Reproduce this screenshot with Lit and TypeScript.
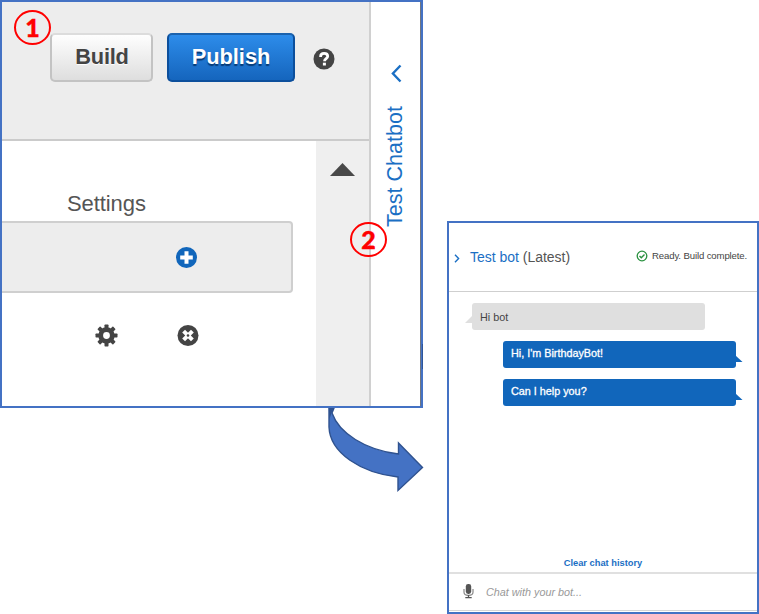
import { LitElement, html, css, svg } from "lit";
import { customElement, property } from "lit/decorators.js";

const teeth = [0, 45, 90, 135, 180, 225, 270, 315];

@customElement("step-badge")
class StepBadge extends LitElement {
  @property() n = "";
  static styles = css`
    :host { display: grid; place-items: center; box-sizing: border-box; width: 37px; height: 35px;
      border: 2px solid #f00; border-radius: 50%; color: #f00; font: 900 25px/30px Lato, sans-serif; }
    span { display: block; height: 31px; -webkit-text-stroke: 0.4px #f00; }
  `;
  render() { return html`<span>${this.n}</span>`; }
}

@customElement("bot-builder")
class BotBuilder extends LitElement {
  static styles = css`
    :host { display: flex; box-sizing: border-box; width: 423px; height: 408px; border: 2px solid #4472c4;
      background: #fff; font-family: "Liberation Sans", Arial, sans-serif; color: #555; }
    svg { display: block; flex: none; }
    .main { width: 367px; display: flex; flex-direction: column; border-right: 2px solid #d0d0d0; flex: none; }
    .bar { height: 106px; background: #ededed; border-bottom: 2px solid #cbcbcb; display: flex;
      align-items: flex-start; padding: 31px 0 0 48px; }
    .btn { box-sizing: border-box; height: 49px; border-radius: 5px; font: bold 21.8px/43px "Liberation Sans", Arial, sans-serif;
      text-align: center; padding: 0 0 2px; margin: 0; }
    .build { width: 103px; border: 2px solid #c3c3c3; border-top-color: #dcdcdc; background: linear-gradient(#fefefe, #dedede);
      color: #444; text-shadow: 0 1px 1px #fff; padding-left: 1px; letter-spacing: -0.2px; }
    .publish { width: 128px; margin-left: 14px; border: 2px solid #0c4f9c; border-top-color: #1b62ad;
      background: linear-gradient(#2d8cea, #1565bd); color: #fff; text-shadow: 0 2px 1px #073b77; }
    .help { margin: 15px 0 0 18px; }
    .body { flex: 1; display: flex; }
    .content { width: 314px; }
    .label { margin: 51px 0 0 65px; font-size: 22px; line-height: 24px; letter-spacing: -0.08px; height: 29px; }
    .row { box-sizing: border-box; width: 291px; height: 72px; border: 2px solid #cfcfcf; border-left: 0; border-radius: 0 4px 4px 0;
      background: #ededed; padding: 23px 0 0 173px; }
    .icons { display: flex; gap: 58px; padding: 31px 0 0 93px; }
    .scroll { width: 53px; background: #efefef; display: flex; justify-content: center; padding-top: 22px; }
    .side { flex: 1; display: flex; flex-direction: column; border-right: 1px solid #707783; }
    .chev { margin: 61px 0 0 19px; }
    .side span { writing-mode: vertical-rl; transform: rotate(180deg); color: #1b6fc4; font-size: 21.5px; line-height: 24px;
      width: 24px; height: 123px; margin: 21px 0 0 12px; letter-spacing: 0.02px; white-space: nowrap; }
  `;
  render() {
    return html`
      <div class="main">
        <div class="bar">
          <button class="btn build">Build</button>
          <button class="btn publish">Publish</button>
          <svg class="help" width="22" height="22" viewBox="0 0 22 22">
            <circle cx="11" cy="11" r="10.5" fill="#444" />
            <path d="M7.6 9V8.4C7.6 6.3 9 5.3 11.1 5.3s3.6 1.1 3.6 2.9c0 2.4-3.2 2.4-3.2 5" fill="none" stroke="#fff" stroke-width="2.8" />
            <rect x="9.9" y="14.7" width="3" height="2.8" fill="#fff" />
          </svg>
        </div>
        <div class="body">
          <div class="content">
            <div class="label">Settings</div>
            <div class="row">
              <svg width="23" height="23" viewBox="0 0 23 23">
                <circle cx="11.5" cy="11.5" r="10.5" fill="#1166bb" />
                <path d="M11.5 5.2v12.6M5.2 11.5h12.6" stroke="#fff" stroke-width="4" />
              </svg>
            </div>
            <div class="icons">
              <svg width="23" height="23" viewBox="0 0 23 23">
                ${teeth.map(a => svg`<rect x="9.5" y="0.5" width="4" height="5" rx=".7" fill="#444" transform="rotate(${a} 11.5 11.5)" />`)}
                <circle cx="11.5" cy="11.5" r="5.8" fill="none" stroke="#444" stroke-width="4.8" />
              </svg>
              <svg width="23" height="23" viewBox="0 0 23 23">
                <circle cx="12" cy="11.5" r="10.5" fill="#444" />
                <path d="M7.6 7.1l8.8 8.8M16.4 7.1l-8.8 8.8" stroke="#fff" stroke-width="4" />
                <circle cx="12" cy="11.5" r="1.3" fill="#444" />
              </svg>
            </div>
          </div>
          <div class="scroll">
            <svg width="25" height="13" viewBox="0 0 25 13"><path d="M12.5 0L25 13H0z" fill="#484848" /></svg>
          </div>
        </div>
      </div>
      <div class="side">
        <svg class="chev" width="12" height="20" viewBox="0 0 12 20">
          <path d="M10.5 2.5L2.9 10.5L10.5 18.5" fill="none" stroke="#1b6fc4" stroke-width="2.4" />
        </svg>
        <span>Test Chatbot</span>
      </div>`;
  }
}

@customElement("test-chat")
class TestChat extends LitElement {
  static styles = css`
    :host { display: flex; flex-direction: column; box-sizing: border-box; width: 312px; height: 393px; border: 2px solid #4472c4;
      background: #fff; font-family: "Liberation Sans", Arial, sans-serif; color: #555; white-space: nowrap; }
    svg { display: block; flex: none; }
    header { box-sizing: border-box; height: 69px; border-bottom: 1px solid #cfcfcf; display: flex; align-items: flex-start; }
    .chev { margin: 31px 0 0 5px; }
    .title { margin: 26px 0 0 10px; font-size: 14px; line-height: 16px; letter-spacing: -0.02px; width: 166px; }
    .title b { font-weight: normal; color: #1b6fc4; }
    .ok { margin-top: 27px; }
    .ready { margin: 27px 0 0 4px; font-size: 9.6px; line-height: 12px; letter-spacing: -0.13px; color: #444; }
    .log { display: flex; flex-direction: column; padding-top: 11px; height: 265px; box-sizing: border-box; }
    .msg { position: relative; box-sizing: border-box; width: 233px; height: 27px; border-radius: 3px; font-size: 10.8px; }
    .msg svg { position: absolute; }
    .in { margin-left: 23px; background: #dfdfdf; color: #444; padding-left: 8px; line-height: 28px; }
    .in svg { left: -7px; top: 12px; }
    .out { margin: 11px 0 0 54px; background: #1166bb; color: #fff; padding-left: 8px; line-height: 24px;
      -webkit-text-stroke: 0.3px #fff; }
    .out svg { left: 232px; top: 14px; }
    .clear { text-align: center; color: #1b6fc4; font: bold 9.3px/12px "Liberation Sans", Arial, sans-serif; height: 15px; }
    footer { display: flex; height: 36px; border-top: 2px solid #e0e0e0; border-bottom: 1px solid #d6d6d6; font-size: 10.8px;
      font-style: italic; color: #999; line-height: 37px; }
    .mic { margin: 10px 12px 0 14px; }
  `;
  render() {
    const tail = html`<svg width="8" height="8" viewBox="0 0 8 8"><path d="M0 0L7.5 7H0z" fill="#1166bb" /></svg>`;
    return html`
      <header>
        <svg class="chev" width="6" height="9" viewBox="0 0 6 9"><path d="M1 .7L4.6 4.5L1 8.3" fill="none" stroke="#1b6fc4" stroke-width="1.4" /></svg>
        <div class="title"><b>Test bot</b> (Latest)</div>
        <svg class="ok" width="12" height="12" viewBox="0 0 12 12">
          <circle cx="6" cy="6" r="4.8" fill="none" stroke="#29913f" stroke-width="1.3" />
          <path d="M3.5 6l1.8 1.8L8.5 4.6" fill="none" stroke="#29913f" stroke-width="1.4" />
        </svg>
        <div class="ready">Ready. Build complete.</div>
      </header>
      <div class="log">
        <div class="msg in"><svg width="8" height="8" viewBox="0 0 8 8"><path d="M8 0L0 8H8z" fill="#dfdfdf" /></svg>Hi bot</div>
        <div class="msg out">${tail}Hi, I'm BirthdayBot!</div>
        <div class="msg out">${tail}Can I help you?</div>
      </div>
      <div class="clear">Clear chat history</div>
      <footer>
        <svg class="mic" width="11" height="15" viewBox="0 0 11 15">
          <rect x="2.8" y="0" width="5.4" height="10" rx="2.4" fill="#555" />
          <path d="M1 5v3.3C1 10.6 3 11.4 5.5 11.4S10 10.6 10 8.3V5" fill="none" stroke="#888" stroke-width="1.2" />
          <path d="M5.5 11v2.8M2.3 13.7h6.4" stroke="#555" stroke-width="1.3" />
        </svg>
        <span>Chat with your bot...</span>
      </footer>`;
  }
}

@customElement("app-root")
class AppRoot extends LitElement {
  static styles = css`
    :host { display: block; position: relative; width: 759px; height: 614px; background: #fff; overflow: hidden; }
    .builder, .chat, .arrow, .one, .two, .nub { position: absolute; }
    .builder { left: 0; top: 0; }
    .chat { left: 447px; top: 221px; }
    .arrow { left: 320px; top: 400px; }
    .one { left: 14px; top: 10px; }
    .two { left: 350px; top: 222px; }
    .nub { left: 422px; top: 344px; width: 1px; height: 25px; background: #2f5597; }
  `;
  render() {
    return html`
      <svg class="arrow" width="106" height="94" viewBox="0 0 106 94">
        <path d="M9 4V27C10 53 41 73 78 77V90.5L102.5 67.5L78.5 43V54C45 50 19 33 12 13L14 8V4z" fill="#4472c4" stroke="#2f528f" stroke-width="1.4" />
        <path d="M8.5 4H14V8L11.5 13L9.5 19z" fill="#2f528f" />
      </svg>
      <bot-builder class="builder"></bot-builder>
      <div class="nub"></div>
      <test-chat class="chat"></test-chat>
      <step-badge class="one" n="1"></step-badge>
      <step-badge class="two" n="2"></step-badge>`;
  }
}
